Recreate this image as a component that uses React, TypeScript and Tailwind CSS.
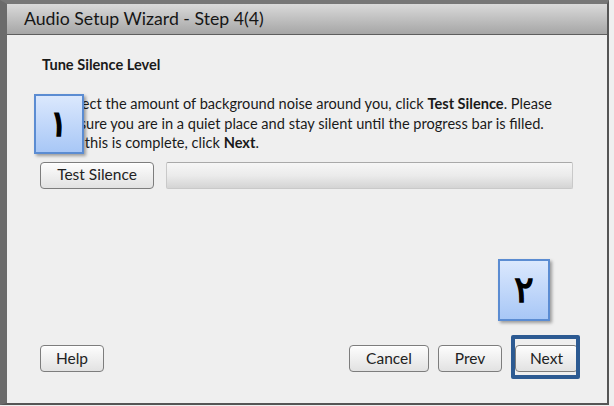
import React from "react";

const btn =
  "h-[27px] rounded-[4px] border border-[#7d7d7d] bg-gradient-to-b from-[#fdfdfd] to-[#e2e2e2] text-[15.5px] text-[#222] flex items-center justify-center shadow-[inset_0_1px_0_#fff]";

export default function App() {
  return (
    <div
      className="relative w-[614px] h-[406px] bg-[#efefef] overflow-hidden"
      style={{ fontFamily: "Lato, 'Open Sans', sans-serif" }}
    >
      <div className="w-[609px] h-[405px] flex flex-col border-l-[7px] border-t-[4px] border-r-[2px] border-b-[2px] border-l-[#6b6b6b] border-t-[#777] border-r-[#555] border-b-[#555] bg-[#efefef]">
        <div className="h-[31px] shrink-0 bg-gradient-to-b from-[#dadada] to-[#a6a6a6] border-b border-[#5e5e5e] flex items-center pl-[17px]">
          <span className="text-[17.7px] text-[#161616]">Audio Setup Wizard - Step 4(4)</span>
        </div>
        <div className="flex-1 flex flex-col pl-[33px] pr-[29px] pt-[20px] pb-[31px]">
          <div className="ml-[2px] h-[20px] leading-[20px] text-[14.6px] font-bold text-[#1a1a1a]">Tune Silence Level</div>
          <div className="ml-[2px] mt-[19px] text-[14.6px] leading-[19.5px] text-[#1a1a1a]">
            <div className="whitespace-nowrap">
              To detect the amount of background noise around you, click <b>Test Silence</b>. Please
            </div>
            <div className="whitespace-nowrap">make sure you are in a quiet place and stay silent until the progress bar is filled.</div>
            <div className="whitespace-nowrap">
              When this is complete, click <b>Next</b>.
            </div>
          </div>
          <div className="mt-[9px] flex items-center gap-[12px]">
            <div className={btn + " w-[114px]"}>Test Silence</div>
            <div className="h-[27px] w-[407px] rounded-[2px] border border-[#c9c9c9] border-t-[#a9a9a9] bg-gradient-to-b from-[#f6f6f6] via-[#ebebeb] to-[#d4d4d4]" />
          </div>
          <div className="flex-1" />
          <div className="flex items-center">
            <div className={btn + " w-[64px]"}>Help</div>
            <div className="flex-1" />
            <div className={btn + " w-[80px]"}>Cancel</div>
            <div className={btn + " w-[64px] ml-[9px]"}>Prev</div>
            <div className={btn + " w-[63px] ml-[13px]"}>Next</div>
          </div>
        </div>
      </div>

      <div className="absolute left-[34px] top-[94px] w-[50px] h-[60px] border-2 border-[#5b8cd2] bg-gradient-to-b from-[#dbe8fd] to-[#a8c7f6] shadow-[2px_2px_3px_rgba(0,0,0,0.35)] flex items-center justify-center">
        <span className="inline-block -skew-x-[5deg] text-[36px] leading-none text-black [-webkit-text-stroke:1.5px_black]" style={{ fontFamily: "'DejaVu Sans', sans-serif" }}>١</span>
      </div>
      <div className="absolute left-[498px] top-[259px] w-[52px] h-[62px] border-2 border-[#5b8cd2] bg-gradient-to-b from-[#dbe8fd] to-[#a8c7f6] shadow-[2px_2px_3px_rgba(0,0,0,0.35)] flex items-center justify-center">
        <span className="text-[36px] leading-none text-black [-webkit-text-stroke:1.5px_black]" style={{ fontFamily: "'DejaVu Sans', sans-serif" }}>٢</span>
      </div>
      <div className="absolute left-[511px] top-[335px] w-[69px] h-[44px] border-[4px] border-[#2c5a92] rounded-[2px]" />
    </div>
  );
}
